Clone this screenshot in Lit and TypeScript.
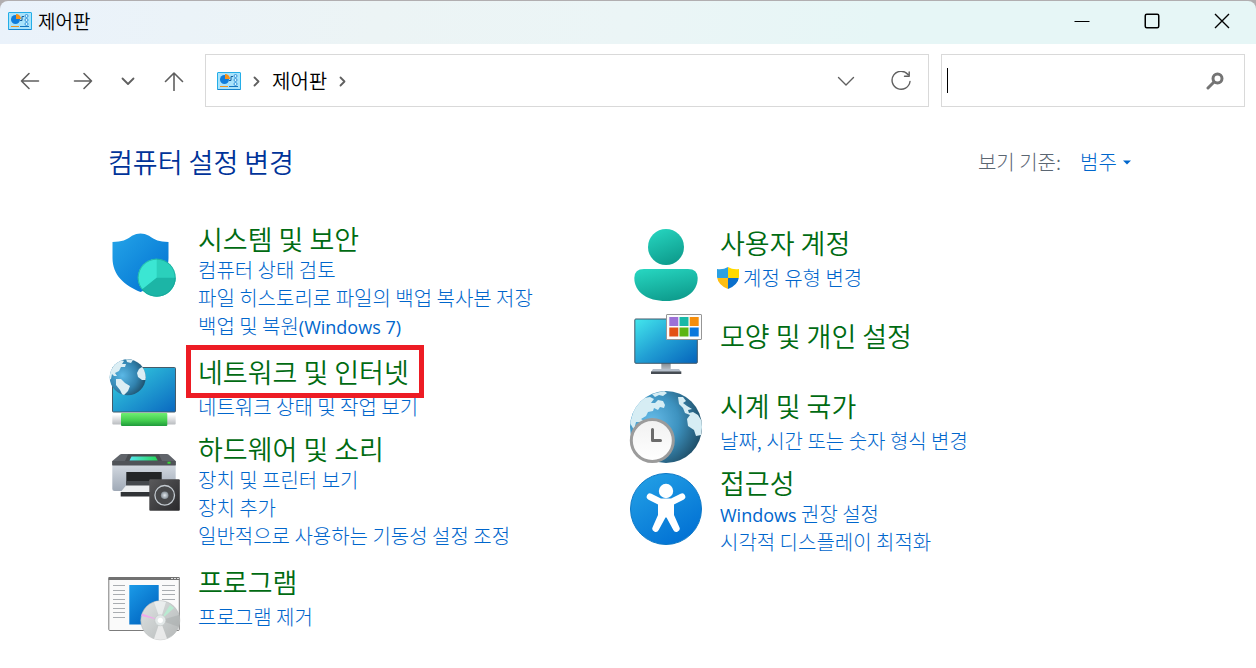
import { LitElement, html, svg, css, nothing } from "lit";
import type { TemplateResult } from "lit";
import { customElement, property } from "lit/decorators.js";

interface Link {
  text: string;
  shield?: boolean;
}

interface Category {
  title: string;
  icon: string;
  links: Link[];
  size: string;
  marked?: boolean;
}

const leftColumn: Category[] = [
  {
    title: "시스템 및 보안",
    icon: "security",
    size: "full",
    links: [
      { text: "컴퓨터 상태 검토" },
      { text: "파일 히스토리로 파일의 백업 복사본 저장" },
      { text: "백업 및 복원(Windows 7)" },
    ],
  },
  {
    title: "네트워크 및 인터넷",
    icon: "network",
    size: "single",
    marked: true,
    links: [{ text: "네트워크 상태 및 작업 보기" }],
  },
  {
    title: "하드웨어 및 소리",
    icon: "hardware",
    size: "full",
    links: [
      { text: "장치 및 프린터 보기" },
      { text: "장치 추가" },
      { text: "일반적으로 사용하는 기동성 설정 조정" },
    ],
  },
  {
    title: "프로그램",
    icon: "programs",
    size: "single",
    links: [{ text: "프로그램 제거" }],
  },
];

const rightColumn: Category[] = [
  {
    title: "사용자 계정",
    icon: "accounts",
    size: "single roomy",
    links: [{ text: "계정 유형 변경", shield: true }],
  },
  { title: "모양 및 개인 설정", icon: "appearance", size: "bare", links: [] },
  {
    title: "시계 및 국가",
    icon: "clock",
    size: "single",
    links: [{ text: "날짜, 시간 또는 숫자 형식 변경" }],
  },
  {
    title: "접근성",
    icon: "access",
    size: "full",
    links: [{ text: "Windows 권장 설정" }, { text: "시각적 디스플레이 최적화" }],
  },
];

const rows = (ys: number[], x1: number, x2: number) =>
  ys.map((y) => svg`<path d="M${x1} ${y}H${x2}" stroke="#a9adb1" stroke-width="1"/>`);

const icons: Record<string, TemplateResult> = {
  security: svg`
    <defs>
      <linearGradient id="sh" x1="0" y1="0" x2="1" y2="1"><stop offset="0" stop-color="#24a4e8"/><stop offset="1" stop-color="#006fd0"/></linearGradient>
    </defs>
    <path d="M4.5 20C14 20 18.500 18 24 13.800Q32.500 9 41 13.800C47 18 51 20 60.500 20V36C60.500 53 49 64 32.500 70C16 63 4.500 53 4.500 36Z" fill="url(#sh)"/>
    <circle cx="48.700" cy="55.700" r="19" fill="#2bd0bc"/>
    <path d="M48.700 55.700V36.700A19 19 0 0 0 34 67.600Z" fill="#3be6d3"/>
    <path d="M48.700 55.700H67.700A19 19 0 0 1 34 67.600Z" fill="#1cb5a6"/>
    <circle cx="48.700" cy="55.700" r="18.500" fill="none" stroke="#159e92" stroke-opacity=".6"/>`,
  network: svg`
    <defs>
      <linearGradient id="nm" x1="0" y1="0" x2="1" y2="1"><stop offset="0" stop-color="#38d4e2"/><stop offset="1" stop-color="#0a68c0"/></linearGradient>
      <radialGradient id="ng" cx=".35" cy=".45" r=".7"><stop offset="0" stop-color="#5bb8e6"/><stop offset=".6" stop-color="#3182ae"/><stop offset="1" stop-color="#1c4a63"/></radialGradient>
      <linearGradient id="nt" x1="0" y1="0" x2="0" y2="1"><stop offset="0" stop-color="#6fee72"/><stop offset=".6" stop-color="#42cc4e"/><stop offset="1" stop-color="#1f9a3b"/></linearGradient>
      <linearGradient id="nw" x1="0" y1="0" x2="0" y2="1"><stop offset="0" stop-color="#fff"/><stop offset="1" stop-color="#b9bcc0"/></linearGradient>
      <clipPath id="nc"><circle cx="19.700" cy="22.300" r="18"/></clipPath>
    </defs>
    <rect x="4.500" y="12.500" width="63" height="44.500" rx="1" fill="url(#nm)" stroke="#455b69"/>
    <rect x="4.300" y="59.500" width="63.400" height="10" rx="1" fill="url(#nw)"/>
    <rect x="13" y="58" width="46.300" height="13" rx="1" fill="url(#nt)"/>
    <circle cx="19.700" cy="22.300" r="18" fill="url(#ng)"/>
    <g clip-path="url(#nc)" fill="#dceef4">
      <path d="M2 16L6 9L13 5L16 6L14 9L18 9L17 12L13 12L11 16L7 18L9 21L6 21L4 19L3 24L0 25Z"/>
      <path d="M8 24L13 24L17 28L22 31L20 36L15 41L12 35L8 30Z"/>
      <path d="M18 4L25 5L23 8L19 7ZM31 14L34 12L40 16V25L34 25L30 22L29 18Z"/>
    </g>`,
  hardware: svg`
    <defs>
      <linearGradient id="pb" x1="0" y1="0" x2="0" y2="1"><stop offset="0" stop-color="#d2d8e0"/><stop offset="1" stop-color="#9fa9b6"/></linearGradient>
      <linearGradient id="ps" x1="0" y1="0" x2="1" y2="0"><stop offset="0" stop-color="#55e5ef"/><stop offset="1" stop-color="#25d657"/></linearGradient>
      <linearGradient id="sp" x1="0" y1="0" x2="1" y2="1"><stop offset="0" stop-color="#5a5a5c"/><stop offset="1" stop-color="#29292b"/></linearGradient>
      <radialGradient id="sc"><stop offset="0" stop-color="#e3e9ee"/><stop offset="1" stop-color="#838c94"/></radialGradient>
    </defs>
    <path d="M4.300 33H67.700V57Q67.700 59 65.500 59H6.500Q4.300 59 4.300 57Z" fill="url(#pb)"/>
    <path d="M4.300 33V29L12 22.500Q12.500 22 13.500 22H59Q60 22 60.500 22.500L67.700 29V33Z" fill="#60646a"/>
    <path d="M4.300 29H67.700V33.500H4.300Z" fill="#505358"/>
    <path d="M20 22.500H51L54 29H17Z" fill="#4a4d51"/>
    <path d="M23.500 24.500H47.500L49.700 28.500H21.500Z" fill="url(#ps)"/>
    <path d="M59.500 29.700h3v2h-3z" fill="#35dc35"/>
    <rect x="18.300" y="40" width="35.400" height="15" fill="#232527"/>
    <path d="M18.300 49H53V54H18.300Z" fill="#44484c"/>
    <path d="M18 53.500H54L57 60H12.700Z" fill="#eceef0"/>
    <path d="M12.700 60H45V64.500H12.700Z" fill="#303336"/>
    <rect x="41.300" y="47.300" width="30.500" height="31.400" rx="1" fill="url(#sp)"/>
    <circle cx="56.700" cy="63.300" r="9.800" fill="#48494b" stroke="#c3cad0" stroke-width="1.300"/>
    <circle cx="56.700" cy="63.300" r="3.800" fill="url(#sc)"/>`,
  programs: svg`
    <defs>
      <linearGradient id="pr" x1="0" y1="0" x2=".7" y2="1"><stop offset="0" stop-color="#1b9be8"/><stop offset="1" stop-color="#0064c0"/></linearGradient>
      <linearGradient id="dc" x1="0" y1="0" x2="1" y2="1"><stop offset="0" stop-color="#dfe3e3"/><stop offset=".5" stop-color="#c9cdcd"/><stop offset="1" stop-color="#b4b7b7"/></linearGradient>
    </defs>
    <rect x=".8" y="12.500" width="70.500" height="53" rx="1" fill="#fafafa" stroke="#7c7c7c"/>
    <path d="M.5 12H71.500V15H.5Z" fill="#717171"/>
    <path d="M63 13.500h2m1 0h2m1 0h2" stroke="#ddd"/>
    ${rows([20.5, 25.5, 29.5, 34.5, 38.5, 43.5, 47.5, 52.5], 5, 17)}
    ${rows([20.5, 25.5, 29.5, 34.5], 54, 67)}
    <rect x="21.300" y="20" width="29.400" height="39.500" fill="url(#pr)"/>
    <circle cx="52.300" cy="55.300" r="19.500" fill="url(#dc)" stroke="#b5b9b9" stroke-width=".6"/>
    <path d="M52.300 55.300L46 37A19 19 0 0 1 58 37Z" fill="#f0f2f2" opacity=".8"/>
    <path d="M52.300 55.300L59 73.500A19 19 0 0 1 46 73.700Z" fill="#f2f2f2" opacity=".8"/>
    <path d="M52.300 55.300L34 48.500L33.500 51Z" fill="#f1a9ec"/>
    <path d="M52.300 55.300L62 40L66 43Z" fill="#b9ead1"/>
    <path d="M52.300 55.300L71 50V62Z" fill="#9fa5a5" opacity=".4"/>
    <circle cx="52.300" cy="55.300" r="5.500" fill="#e3e8e8" stroke="#bfc5c5" stroke-width=".6"/>
    <circle cx="52.300" cy="55.300" r="2.600" fill="#fff"/>`,
  accounts: svg`
    <defs>
      <linearGradient id="us" x1=".3" y1="0" x2=".7" y2="1"><stop offset="0" stop-color="#25d2bd"/><stop offset="1" stop-color="#0d9a8b"/></linearGradient>
    </defs>
    <circle cx="36" cy="21" r="18" fill="url(#us)"/>
    <path d="M14 43H58Q67.700 43 67.700 52C67.700 66 55 75 36 75S4.300 66 4.300 52Q4.300 43 14 43Z" fill="url(#us)"/>`,
  appearance: svg`
    <defs>
      <linearGradient id="ap" x1="0" y1="0" x2="1" y2="1"><stop offset="0" stop-color="#43e7ed"/><stop offset=".5" stop-color="#219fd4"/><stop offset="1" stop-color="#0563bb"/></linearGradient>
      <linearGradient id="st" x1="0" y1="0" x2="0" y2="1"><stop offset="0" stop-color="#828990"/><stop offset="1" stop-color="#bac1c9"/></linearGradient>
    </defs>
    <path d="M31.300 44H40.700V51H31.300Z" fill="url(#st)"/>
    <path d="M23 50H49L51.300 53H21Z" fill="#b4bdc9"/>
    <path d="M21 52.500H51.300V55H21Z" fill="#464c53"/>
    <rect x="4.800" y="0" width="62.500" height="44.300" rx="1" fill="url(#ap)" stroke="#42596a"/>
    <rect x="36.500" y="-4.500" width="35" height="25" rx=".5" fill="#fcfcfc" stroke="#969696"/>
    <path d="M39.300-2h9v9h-9z" fill="#9c70d6"/><path d="M49.500-2h9v9h-9z" fill="#18b8a7"/><path d="M59.700-2h9v9h-9z" fill="#f58e0b"/>
    <path d="M39.300 8.500h9v9h-9z" fill="#e35013"/><path d="M49.500 8.500h9v9h-9z" fill="#5cb512"/><path d="M59.700 8.500h9v9h-9z" fill="#0a78dc"/>`,
  clock: svg`
    <defs>
      <radialGradient id="gl" cx=".3" cy=".42" r=".75"><stop offset="0" stop-color="#66bce9"/><stop offset=".5" stop-color="#3d92bf"/><stop offset="1" stop-color="#1c4860"/></radialGradient>
      <linearGradient id="cf" x1="0" y1="0" x2="0" y2="1"><stop offset="0" stop-color="#f1f1f1"/><stop offset="1" stop-color="#fff"/></linearGradient>
      <clipPath id="gc"><circle cx="36" cy="38" r="36"/></clipPath>
    </defs>
    <circle cx="36" cy="38" r="36" fill="url(#gl)"/>
    <g clip-path="url(#gc)" fill="#d6edf4">
      <path d="M0 34L5 17L14 9L20 8L24 10L21 14L25 14L28 11L33 12L35 16L34 19L30 18L28 21L24 19L23 22L18 23L16 27L11 30L14 32L14 36L10 33L6 33L5 37L9 40L4 41Z"/>
      <path d="M22 5L34 2L37 4L33 7L29 6L25 8Z"/>
      <path d="M48 8L53 8L56 12L53 14L57 17L62 20L58 21L59 24L63 23L68 26L73 34L71 46L66 47L64 41L58 37L57 30L60 26L55 24L53 19L49 15Z"/>
    </g>
    <circle cx="22.300" cy="51.500" r="21" fill="url(#cf)" stroke="#9b9b9b" stroke-width="3"/>
    <path d="M22.500 40.500V51.500H30.500" fill="none" stroke="#6b6b6b" stroke-width="3" stroke-linecap="round" stroke-linejoin="round"/>`,
  access: svg`
    <defs>
      <linearGradient id="ac" x1=".2" y1="0" x2=".8" y2="1"><stop offset="0" stop-color="#229fe5"/><stop offset="1" stop-color="#006fd3"/></linearGradient>
    </defs>
    <circle cx="36" cy="43" r="35.500" fill="url(#ac)" stroke="#0d79c7"/>
    <circle cx="36" cy="25" r="7.200" fill="#fff"/>
    <path d="M20 30.800L30 35.700H42L52 30.800" fill="none" stroke="#fff" stroke-width="6.600" stroke-linecap="round" stroke-linejoin="round"/>
    <path d="M28 34H44V49L49.300 61A3.300 3.300 0 0 1 43.300 64L36.500 51.500H35.500L28.700 64A3.300 3.300 0 0 1 22.700 61L28 49Z" fill="#fff"/>`,
};

const panelGlyph = html`
  <svg class="panel-glyph" viewBox="0 0 24 18" width="24" height="18" aria-hidden="true">
    <rect x=".5" y=".5" width="23" height="17" rx=".5" fill="#a9e3fb" stroke="#24aee8"/>
    <path d="M.5 17.500H23.500" stroke="#1685cf"/>
    <circle cx="7.500" cy="7.500" r="4.500" fill="#0f7ddb"/>
    <path d="M8 7V2A5 5 0 0 1 13 7Z" fill="#f5921b"/>
    <path d="M12 8.500H14V4.500H16" fill="none" stroke="#155f9c"/>
    <circle cx="18.500" cy="4" r="1.500" fill="#d8f3ff" stroke="#1782d0" stroke-width=".8"/>
    <circle cx="18.500" cy="8" r="1.500" fill="#d8f3ff" stroke="#1782d0" stroke-width=".8"/>
    <circle cx="18.500" cy="12" r="1.500" fill="#d8f3ff" stroke="#1782d0" stroke-width=".8"/>
    <path d="M3 14.500H11" stroke="#ee951f"/><path d="M12 14.500H21" stroke="#1575bf"/>
  </svg>`;

const uacShield = html`
  <svg class="uac" viewBox="0 0 22 22" width="22" height="22" aria-hidden="true">
    <clipPath id="uc"><path d="M0 2Q6 3 11 0Q16 3 22 2V10Q21 18 11 22Q1 18 0 10Z"/></clipPath>
    <g clip-path="url(#uc)">
      <path d="M0 0H11V11H0Z" fill="#2ba0e2"/><path d="M11 0H22V11H11Z" fill="#ffd900"/>
      <path d="M0 11H11V22H0Z" fill="#ffbe12"/><path d="M11 11H22V22H11Z" fill="#0a6fcb"/>
    </g>
  </svg>`;

const stroke = (d: string, size: number, width = 1.6) => html`
  <svg viewBox="0 0 ${size} ${size}" width=${size} height=${size} fill="none" stroke="currentColor"
    stroke-width=${width} stroke-linecap="round" stroke-linejoin="round" aria-hidden="true"><path d=${d}/></svg>`;

const withLatin = (text: string) =>
  text
    .split(/(\(?[A-Za-z][A-Za-z0-9 ]*[A-Za-z0-9]\)?)/)
    .map((part) => (/[A-Za-z]/.test(part) ? html`<span class="latin">${part}</span>` : part));

@customElement("panel-category")
class PanelCategory extends LitElement {
  @property({ attribute: false }) data!: Category;

  static styles = css`
    :host { display: block; }
    .category { display: flex; gap: 18px; padding-bottom: 11px; }
    .category.full { padding-bottom: 15px; }
    .category.roomy { padding-bottom: 27px; }
    .category.bare { padding-bottom: 36px; }
    .icon { flex: none; width: 72px; height: 34px; overflow: visible; }
    .text { min-width: 0; }
    .heading { margin: 0; font-size: 27px; line-height: 34px; font-weight: 350; }
    .heading a { color: #006b12; text-decoration: none; }
    .single .heading { margin-bottom: 4px; }
    .marked { position: relative; display: inline-block; }
    .marked::after {
      content: ""; position: absolute; inset: -10px -15px -9px -12px;
      border: 5px solid #ed1c24; pointer-events: none; z-index: 1;
    }
    .links { list-style: none; margin: 0; padding: 0; }
    .links li { line-height: 28px; font-size: 20px; }
    .links a { color: #0066cc; text-decoration: none; white-space: nowrap; }
    .links a:hover, .heading a:hover { text-decoration: underline; }
    .latin { font-family: "Open Sans", "Noto Sans", sans-serif; font-size: 18px; font-weight: 400; line-height: 20px; }
    .shielded { display: flex; align-items: center; gap: 4px; margin-left: -3px; }
    .uac { flex: none; }
  `;

  render() {
    const c = this.data;
    return html`
      <section class="category ${c.size}">
        <svg class="icon" viewBox="0 0 72 34" aria-hidden="true">${icons[c.icon]}</svg>
        <div class="text">
          <h2 class="heading"><a class=${c.marked ? "marked" : nothing} href="#">${c.title}</a></h2>
          ${c.links.length
            ? html`<ul class="links">
                ${c.links.map((l) => html`<li class=${l.shield ? "shielded" : nothing}>${l.shield ? uacShield : nothing}<a href="#">${withLatin(l.text)}</a></li>`)}
              </ul>`
            : nothing}
        </div>
      </section>`;
  }
}

@customElement("app-root")
class AppRoot extends LitElement {
  static styles = css`
    :host {
      display: block; min-height: 100vh; background: #fff; color: #111;
      font-family: "Noto Sans CJK KR", "Noto Sans", sans-serif; font-weight: 300;
      font-size: 20px; line-height: 28px;
    }
    * { box-sizing: border-box; }
    button, input, select { font: inherit; color: inherit; border: 0; background: none; margin: 0; padding: 0; outline: 0; }
    button { display: flex; align-items: center; justify-content: center; }
    svg { display: block; flex: none; }
    .frame { background: #b1aeb0; padding-top: 1px; }
    .titlebar {
      display: flex; align-items: center; height: 43px; padding: 0 0 3px 8px; gap: 6px;
      border-radius: 8px 8px 0 0;
      background: linear-gradient(100deg, #eaf2fb, #ecf4f5 30%, #ebf5f6 50%, #e6f6f6 70%, #e6f6f6);
    }
    .name { flex: 1; font-size: 19px; font-weight: 350; margin: 0; color: #000; }
    .window-buttons { display: flex; color: #000; margin-right: -1px; }
    .window-buttons button { width: 70px; height: 40px; }
    .toolbar { display: flex; align-items: center; padding: 10px 11px 0 3px; color: #5f5f5f; }
    .nav { display: flex; margin-right: 4px; }
    .nav button { width: 53px; height: 52px; }
    .nav .recent { width: 37px; }
    .nav .up { width: 55px; }
    .address, .search { border: 1px solid #d9d9d9; height: 53px; display: flex; align-items: center; }
    .address { flex: 1; padding-left: 11px; margin-right: 12px; }
    .crumb-arrow { width: 31px; display: flex; justify-content: center; }
    .crumb { color: #000; font-weight: 350; text-decoration: none; }
    .spacer { flex: 1; }
    .address button { width: 55px; height: 50px; }
    .search { position: relative; width: 304px; }
    .search input { flex: 1; min-width: 0; height: 50px; padding-left: 6px; caret-color: transparent; }
    .search button { width: 58px; height: 50px; }
    .caret { position: absolute; left: 5px; top: 13px; width: 1px; height: 25px; background: #000; }
    .content { padding: 35px 104px 20px 108px; }
    .head { display: flex; align-items: center; justify-content: space-between; height: 40px; padding-right: 21px; }
    .title { margin: 0; font-size: 27px; font-weight: 350; color: #003399; }
    .view { display: flex; align-items: center; color: #5b6672; }
    .view label { margin-right: 19px; }
    .view select { appearance: none; color: #0066cc; }
    .view svg { margin-left: 6px; }
    .columns { display: grid; grid-template-columns: 1fr 1fr; padding-top: 40px; }
    .column.second { padding-top: 4px; }
  `;

  render() {
    return html`
      <div class="frame">
        <header class="titlebar">
          ${panelGlyph}
          <h1 class="name">제어판</h1>
          <div class="window-buttons">
            <button aria-label="최소화"><svg width="16" height="16" stroke="currentColor" fill="none"><path d="M.5 8.500H15.500"/></svg></button>
            <button aria-label="최대화"><svg width="16" height="16" stroke="currentColor" stroke-width="1.500" fill="none"><rect x="1.250" y="1.250" width="13.500" height="13.500" rx="1.500"/></svg></button>
            <button aria-label="닫기"><svg width="16" height="16" stroke="currentColor" stroke-width="1.400" fill="none"><path d="M1 1L15 15M15 1L1 15"/></svg></button>
          </div>
        </header>
      </div>
      <div class="toolbar">
        <nav class="nav">
          <button aria-label="뒤로">${stroke("M18.500 10H1.500M9 2.500L1.500 10L9 17.500", 20)}</button>
          <button aria-label="앞으로">${stroke("M1.500 10H18.500M11 2.500L18.500 10L11 17.500", 20)}</button>
          <button class="recent" aria-label="최근 위치">${stroke("M1.500 4.500L7 10L12.500 4.500", 14, 1.8)}</button>
          <button class="up" aria-label="위로">${stroke("M10 19.500V2M1.500 10.500L10 2L18.500 10.500", 20)}</button>
        </nav>
        <div class="address">
          ${panelGlyph}
          <span class="crumb-arrow">${stroke("M3.500 2.500L7.500 6.500L3.500 10.500", 12, 1.8)}</span>
          <a class="crumb" href="#">제어판</a>
          <span class="crumb-arrow">${stroke("M3.500 2.500L7.500 6.500L3.500 10.500", 12, 1.8)}</span>
          <span class="spacer"></span>
          <button aria-label="이전 위치">${stroke("M1.500 5.500L9 13L16.500 5.500", 18, 1.4)}</button>
          <button aria-label="새로 고침">${stroke("M17 3.500A9 9 0 1 0 19 10.500M18.200 1V5.200H13.500", 20, 1.4)}</button>
        </div>
        <div class="search">
          <input type="text" aria-label="제어판 검색" />
          <span class="caret"></span>
          <button aria-label="검색"><svg width="18" height="18" fill="none" stroke="#747474"><circle cx="11.500" cy="6.500" r="4.500" stroke-width="3"/><path d="M8 10L2 16" stroke-width="3" stroke-linecap="round"/></svg></button>
        </div>
      </div>
      <main class="content">
        <div class="head">
          <h1 class="title">컴퓨터 설정 변경</h1>
          <div class="view">
            <label for="view">보기 기준:</label>
            <select id="view"><option>범주</option></select>
            <svg width="8" height="5" aria-hidden="true"><path d="M0 .5H8L4 4.500Z" fill="#0066cc"/></svg>
          </div>
        </div>
        <div class="columns">
          <div class="column">${leftColumn.map((c) => html`<panel-category .data=${c}></panel-category>`)}</div>
          <div class="column second">${rightColumn.map((c) => html`<panel-category .data=${c}></panel-category>`)}</div>
        </div>
      </main>`;
  }
}
